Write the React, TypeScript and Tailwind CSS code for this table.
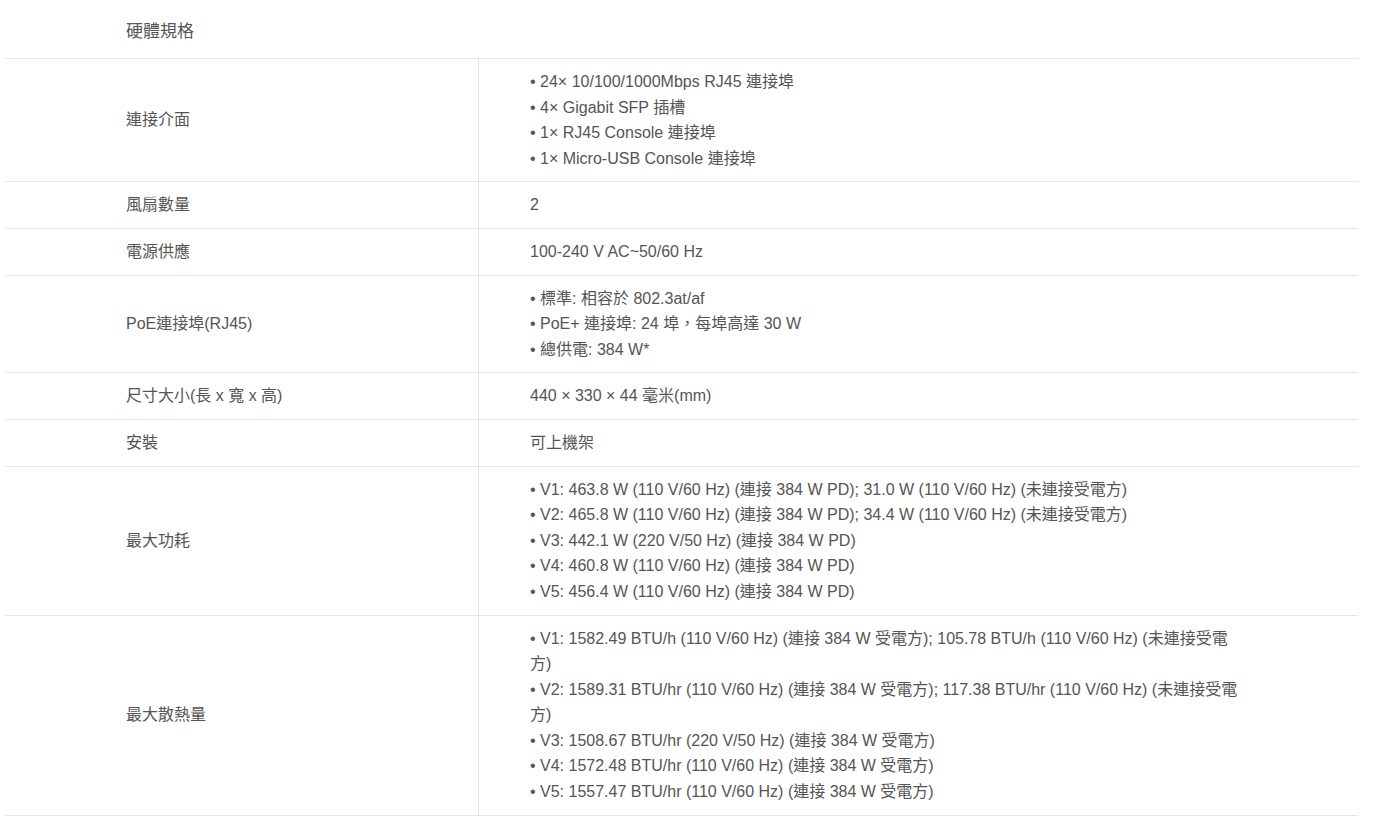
import React from "react";

type Row = { label: string; lines: string[]; bullet?: boolean };

const rows: Row[] = [
  {
    label: "連接介面",
    bullet: true,
    lines: [
      "24× 10/100/1000Mbps RJ45 連接埠",
      "4× Gigabit SFP 插槽",
      "1× RJ45 Console 連接埠",
      "1× Micro-USB Console 連接埠",
    ],
  },
  { label: "風扇數量", lines: ["2"] },
  { label: "電源供應", lines: ["100-240 V AC~50/60 Hz"] },
  {
    label: "PoE連接埠(RJ45)",
    bullet: true,
    lines: ["標準: 相容於 802.3at/af", "PoE+ 連接埠: 24 埠，每埠高達 30 W", "總供電: 384 W*"],
  },
  { label: "尺寸大小(長 x 寬 x 高)", lines: ["440 × 330 × 44 毫米(mm)"] },
  { label: "安裝", lines: ["可上機架"] },
  {
    label: "最大功耗",
    bullet: true,
    lines: [
      "V1: 463.8 W (110 V/60 Hz) (連接 384 W PD); 31.0 W (110 V/60 Hz) (未連接受電方)",
      "V2: 465.8 W (110 V/60 Hz) (連接 384 W PD); 34.4 W (110 V/60 Hz) (未連接受電方)",
      "V3: 442.1 W (220 V/50 Hz) (連接 384 W PD)",
      "V4: 460.8 W (110 V/60 Hz) (連接 384 W PD)",
      "V5: 456.4 W (110 V/60 Hz) (連接 384 W PD)",
    ],
  },
  {
    label: "最大散熱量",
    bullet: true,
    lines: [
      "V1: 1582.49 BTU/h (110 V/60 Hz) (連接 384 W 受電方); 105.78 BTU/h (110 V/60 Hz) (未連接受電方)",
      "V2: 1589.31 BTU/hr (110 V/60 Hz) (連接 384 W 受電方); 117.38 BTU/hr (110 V/60 Hz) (未連接受電方)",
      "V3: 1508.67 BTU/hr (220 V/50 Hz) (連接 384 W 受電方)",
      "V4: 1572.48 BTU/hr (110 V/60 Hz) (連接 384 W 受電方)",
      "V5: 1557.47 BTU/hr (110 V/60 Hz) (連接 384 W 受電方)",
    ],
  },
];

export default function App() {
  return (
    <div
      className="min-h-screen bg-white text-[#555] text-[16px] leading-[25.6px]"
      style={{ fontFamily: '"Liberation Sans", "Noto Sans CJK TC", sans-serif' }}
    >
      <div className="ml-[5px] w-[1353px]">
        {/* Section heading */}
        <div className="flex h-[59px] items-center border-b border-[#e6e6e6] pt-[6px] pl-[121px] text-[17px]">
          硬體規格
        </div>

        {rows.map((row) => (
          <div key={row.label} className="grid grid-cols-[473px_1fr] border-b border-[#e6e6e6]">
            <div className="flex items-center py-[10px] pl-[121px]">{row.label}</div>
            <div className="border-l border-[#e6e6e6] py-[10px] pl-[51px]">
              <div className="max-w-[710px]">
                {row.lines.map((line) => (
                  <div key={line}>{row.bullet ? `• ${line}` : line}</div>
                ))}
              </div>
            </div>
          </div>
        ))}
      </div>
    </div>
  );
}
